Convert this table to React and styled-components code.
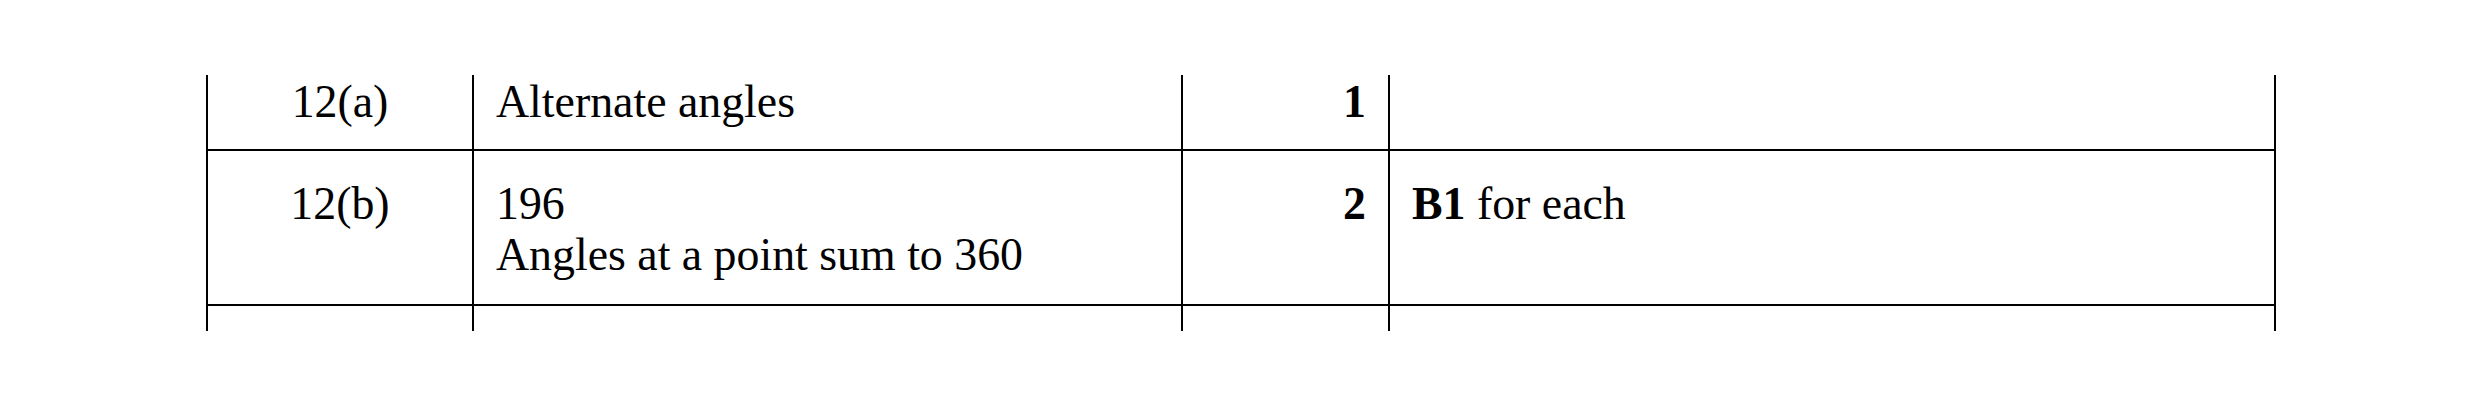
import React from 'react'
import styled, { createGlobalStyle } from 'styled-components'

const GlobalStyle = createGlobalStyle`
    html, body {
        margin: 0;
        padding: 0;
        background: #fff;
    }
    body {
        font-family: "Liberation Serif", "Times New Roman", serif;
        color: #000;
    }
`

const Page = styled.div`
    width: 2481px;
    height: 407px;
    padding: 75px 0 0 206px;
    box-sizing: border-box;
`

const Grid = styled.div`
    display: grid;
    grid-template-columns: 264px 707px 205px 884px;
    grid-template-rows: 74px 153px 25px;
    gap: 2px;
    padding: 0 2px;
    width: max-content;
    background: #000;
`

const Cell = styled.div`
    background: #fff;
    padding: ${({ $top }) => $top || 0}px 22px 0;
    font-size: 45.83px;
    line-height: 51px;
    text-align: ${({ $align }) => $align || 'left'};
    font-weight: ${({ $bold }) => ($bold ? 700 : 400)};
    white-space: nowrap;
`

const Strong = styled.b`
    font-weight: 700;
`

const rows = [
    { q: '12(a)', answer: ['Alternate angles'], mark: '1', notes: null, top: 1 },
    {
        q: '12(b)',
        answer: ['196', 'Angles at a point sum to 360'],
        mark: '2',
        notes: (
            <>
                <Strong>B1</Strong> for each
            </>
        ),
        top: 27,
    },
    { q: '', answer: [], mark: '', notes: null, top: 0 },
]

export default function App() {
    return (
        <>
            <GlobalStyle />
            <Page>
                <Grid>
                    {rows.map((r, i) => (
                        <React.Fragment key={i}>
                            <Cell $top={r.top} $align="center">
                                {r.q}
                            </Cell>
                            <Cell $top={r.top}>
                                {r.answer.map((line, j) => (
                                    <div key={j}>{line}</div>
                                ))}
                            </Cell>
                            <Cell $top={r.top} $align="right" $bold>
                                {r.mark}
                            </Cell>
                            <Cell $top={r.top}>{r.notes}</Cell>
                        </React.Fragment>
                    ))}
                </Grid>
            </Page>
        </>
    )
}
